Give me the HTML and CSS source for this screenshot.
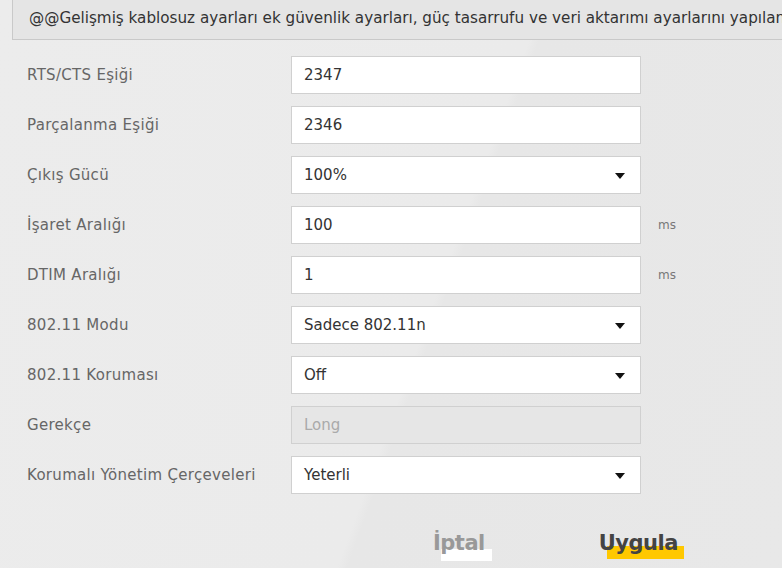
FILE: index.html
```html
<!DOCTYPE html>
<html lang="tr">
<head>
<meta charset="utf-8">
<link rel="stylesheet" href="styles.css">
</head>
<body>
<div class="page">
  <div class="notice">@@Gelişmiş kablosuz ayarları ek güvenlik ayarları, güç tasarrufu ve veri aktarımı ayarlarını yapılandırın.</div>
  <div class="form">
    <div class="row"><div class="label">RTS/CTS Eşiği</div><div class="field">2347</div></div>
    <div class="row"><div class="label">Parçalanma Eşiği</div><div class="field">2346</div></div>
    <div class="row"><div class="label">Çıkış Gücü</div><div class="field select">100%<span class="arrow"></span></div></div>
    <div class="row"><div class="label">İşaret Aralığı</div><div class="field">100</div><div class="unit">ms</div></div>
    <div class="row"><div class="label">DTIM Aralığı</div><div class="field">1</div><div class="unit">ms</div></div>
    <div class="row"><div class="label">802.11 Modu</div><div class="field select">Sadece 802.11n<span class="arrow"></span></div></div>
    <div class="row"><div class="label">802.11 Koruması</div><div class="field select">Off<span class="arrow"></span></div></div>
    <div class="row"><div class="label">Gerekçe</div><div class="field disabled">Long</div></div>
    <div class="row"><div class="label">Korumalı Yönetim Çerçeveleri</div><div class="field select">Yeterli<span class="arrow"></span></div></div>
  </div>
  <div class="actions">
    <span class="btn cancel">İptal</span>
    <span class="btn apply">Uygula</span>
  </div>
</div>
</body>
</html>
```
FILE: styles.css
```css
html, body {
  margin: 0;
  padding: 0;
}
body {
  width: 782px;
  height: 568px;
  overflow: hidden;
  background: linear-gradient(110deg, #ececec 0%, #ebebeb 55%, #e7e7e7 56%, #e8e8e8 100%);
  font-family: "DejaVu Sans", sans-serif;
}
.page {
  width: 782px;
}
.notice {
  margin-left: 12px;
  height: 41px;
  box-sizing: border-box;
  border-left: 1px solid #c9c9c9;
  border-bottom: 1px solid #c9c9c9;
  background: #e5e5e5;
  color: #333;
  font-size: 15.2px;
  line-height: 38px;
  padding-left: 16px;
  white-space: nowrap;
  overflow: hidden;
  margin-top: -1px;
}
.form {
  padding-top: 16px;
  padding-left: 27px;
  display: flex;
  flex-direction: column;
  gap: 12px;
}
.row {
  display: flex;
  align-items: center;
  height: 38px;
}
.label {
  width: 264px;
  font-size: 15px;
  color: #666;
  letter-spacing: 0.3px;
  white-space: nowrap;
}
.field {
  position: relative;
  width: 350px;
  height: 38px;
  box-sizing: border-box;
  border: 1px solid #d0d0d0;
  background: #fff;
  padding-left: 12px;
  font-size: 15px;
  line-height: 36px;
  color: #333;
}
.field.disabled {
  background: #e6e6e6;
  color: #aaa;
}
.arrow {
  position: absolute;
  right: 15px;
  top: 16px;
  width: 0;
  height: 0;
  border-left: 5px solid transparent;
  border-right: 5px solid transparent;
  border-top: 6px solid #111;
}
.unit {
  margin-left: 17px;
  font-size: 12px;
  color: #777;
}
.actions {
  display: flex;
  padding-left: 433px;
  margin-top: 36px;
  gap: 114px;
}
.btn {
  position: relative;
  font-weight: bold;
  font-size: 21px;
  letter-spacing: -0.5px;
  line-height: 26px;
  z-index: 0;
}
.btn::after {
  content: "";
  position: absolute;
  z-index: -1;
  left: 8px;
  right: -7px;
  top: 19px;
  height: 12px;
}
.cancel {
  color: #999;
}
.cancel::after {
  background: #fff;
}
.apply {
  color: #444;
}
.apply::after {
  background: #ffc800;
  top: 16px;
  height: 13px;
  right: -6px;
}
```
